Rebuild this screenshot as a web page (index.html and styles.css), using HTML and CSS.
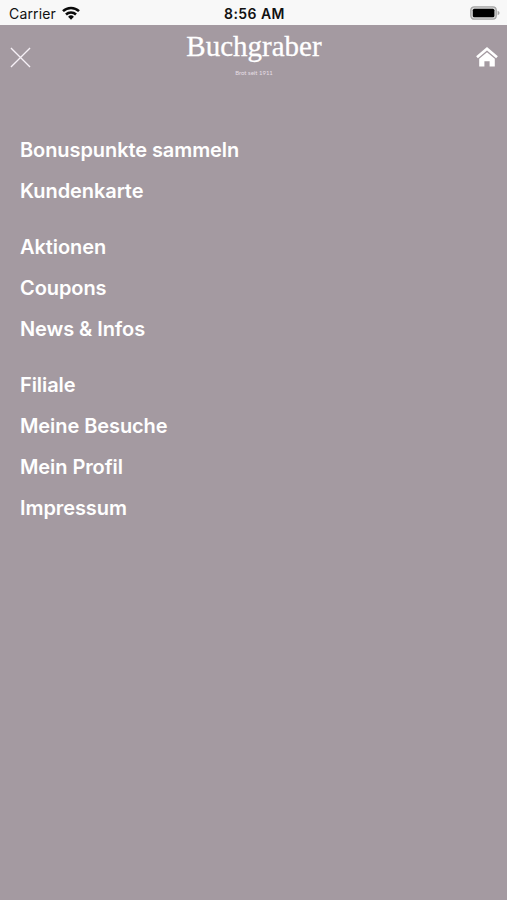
FILE: index.html
```
<!DOCTYPE html>
<html lang="de">
<head>
    <meta charset="UTF-8">
    <meta name="viewport" content="width=device-width, initial-scale=1.0">
    <title>Buchgraber</title>
    <link rel="stylesheet" href="styles.css">
</head>
<body>
    <div class="status-bar">
        <div class="carrier">
            <span class="carrier-name">Carrier</span>
            <svg class="wifi" width="18" height="14" viewBox="0 0 18 14" fill="none" stroke="#0a0a0a" stroke-width="2.5">
                <path d="M1 5.2a11.4 11.4 0 0 1 16 0"/>
                <path d="M4 8.5a7.1 7.1 0 0 1 10 0"/>
                <path d="M9 13.7l-2.9-3a4.1 4.1 0 0 1 5.8 0z" fill="#0a0a0a" stroke="none"/>
            </svg>
        </div>
        <div class="time">8:56 AM</div>
        <div class="status-right">
            <svg class="battery" width="30" height="14" viewBox="0 0 30 14">
                <rect x="0.8" y="0.8" width="25.4" height="12.4" rx="3.4" fill="#d8d8d8" stroke="#a5a5a5" stroke-width="1.3"/>
                <rect x="2.8" y="2.7" width="21.6" height="8.6" rx="1.6" fill="#000"/>
                <path d="M27.6 4.8q2 .7 2 2.2t-2 2.2z" fill="#a5a5a5"/>
            </svg>
        </div>
    </div>
    <header class="header">
        <button class="icon-btn" aria-label="Schließen">
            <svg width="21" height="21" viewBox="0 0 22 22" fill="none" stroke="#f7f1f7" stroke-width="1.4">
                <path d="M1 1l20 20M21 1L1 21"/>
            </svg>
        </button>
        <div class="brand">
            <div class="brand-name">Buchgraber</div>
            <div class="brand-tagline">Brot seit 1911</div>
        </div>
        <button class="icon-btn" aria-label="Startseite">
            <svg width="22" height="20" viewBox="0 0 22 20">
                <path d="M1 10.2L11 1.8l10 8.4" fill="none" stroke="#fff" stroke-width="2.7"/>
                <path d="M11 5.2l7.8 6.5v7.9h-5.2v-5.4H8.4v5.4H3.2v-7.9z" fill="#fff"/>
            </svg>
        </button>
    </header>
    <nav class="menu">
        <ul class="menu-group">
            <li>Bonuspunkte sammeln</li>
            <li>Kundenkarte</li>
        </ul>
        <ul class="menu-group">
            <li>Aktionen</li>
            <li>Coupons</li>
            <li>News &amp; Infos</li>
        </ul>
        <ul class="menu-group">
            <li>Filiale</li>
            <li>Meine Besuche</li>
            <li>Mein Profil</li>
            <li>Impressum</li>
        </ul>
    </nav>
</body>
</html>
```
FILE: styles.css
```
body {
    margin: 0;
    min-height: 100vh;
    background-color: #a49aa1;
    color: #fff;
    font-family: Inter, "Liberation Sans", sans-serif;
}

.status-bar {
    display: grid;
    grid-template-columns: 1fr auto 1fr;
    align-items: center;
    height: 25px;
    padding: 1px 7px 0 9px;
    box-sizing: border-box;
    background-color: #f8f8f8;
    color: #111;
    font-size: 14px;
}

.carrier {
    display: flex;
    align-items: center;
    gap: 6px;
}

.carrier-name {
    letter-spacing: 0.15px;
}

.time {
    font-weight: 600;
    letter-spacing: 0.45px;
}

.status-right {
    display: flex;
    justify-content: flex-end;
}

.header {
    display: flex;
    justify-content: space-between;
    height: 65px;
    padding: 0 9px 0 10px;
}

.icon-btn {
    display: flex;
    align-items: center;
    width: 22px;
    height: 64px;
    padding: 0;
    border: none;
    background: none;
}

.brand {
    padding-top: 5px;
    text-align: center;
}

.brand-name {
    font-family: "Liberation Serif", serif;
    font-size: 29px;
    line-height: 33px;
    -webkit-text-stroke: 0.3px #fff;
}

.brand-tagline {
    margin-top: 6px;
    color: #e6dfe5;
    font-family: Lato, sans-serif;
    font-size: 6px;
    line-height: 8px;
}

.menu {
    padding: 40px 20px 0;
}

.menu-group {
    list-style: none;
    margin: 0 0 15px;
    padding: 0;
    font-size: 20px;
    font-weight: 600;
    line-height: 41px;
    letter-spacing: -0.08px;
}
```
